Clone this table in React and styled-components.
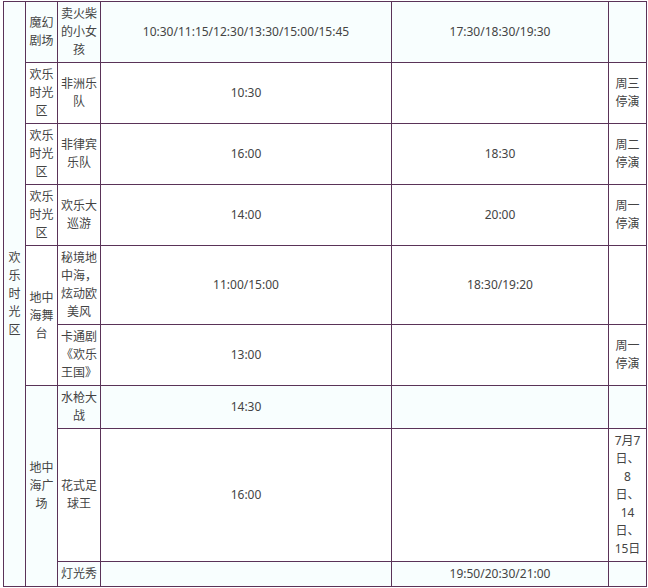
import React from "react";
import styled, { createGlobalStyle } from "styled-components";

const Global = createGlobalStyle`
  html, body { margin: 0; padding: 0; background: #ffffff; }
  body {
    font-family: "Noto Sans", "Noto Sans CJK SC", sans-serif;
    font-size: 12px;
    color: #444444;
  }
`;

const Page = styled.div`
  padding: 1px 0 0 3px;
`;

const Table = styled.table`
  border-collapse: collapse;
  table-layout: fixed;
  width: 644px;
  background: #ffffff;
`;

const Col = styled.col`
  width: ${(p) => p.$w}px;
`;

const Row = styled.tr`
  background: ${(p) => (p.$tint ? "#f8fefe" : "#ffffff")};
`;

const Cell = styled.td`
  border: 1px solid #5a3358;
  padding: 3px 2px;
  line-height: 18px;
  text-align: center;
  vertical-align: middle;
  word-break: normal;
  color: #444444;
`;

const cols = [22, 32, 43, 291, 217, 38];

const dates = ["7月7", "日、", "8", "日、", "14", "日、", "15日"];

export default function App() {
  return (
    <>
      <Global />
      <Page>
        <Table>
          <colgroup>
            {cols.map((w, i) => (
              <Col key={i} $w={w} />
            ))}
          </colgroup>
          <tbody>
            <Row $tint>
              <Cell rowSpan={9}>欢乐时光区</Cell>
              <Cell>魔幻剧场</Cell>
              <Cell>卖火柴的小女孩</Cell>
              <Cell>10:30/11:15/12:30/13:30/15:00/15:45</Cell>
              <Cell>17:30/18:30/19:30</Cell>
              <Cell></Cell>
            </Row>
            <Row>
              <Cell>欢乐时光区</Cell>
              <Cell>非洲乐队</Cell>
              <Cell>10:30</Cell>
              <Cell></Cell>
              <Cell>周三停演</Cell>
            </Row>
            <Row>
              <Cell>欢乐时光区</Cell>
              <Cell>非律宾乐队</Cell>
              <Cell>16:00</Cell>
              <Cell>18:30</Cell>
              <Cell>周二停演</Cell>
            </Row>
            <Row>
              <Cell>欢乐时光区</Cell>
              <Cell>欢乐大巡游</Cell>
              <Cell>14:00</Cell>
              <Cell>20:00</Cell>
              <Cell>周一停演</Cell>
            </Row>
            <Row>
              <Cell rowSpan={2}>地中海舞台</Cell>
              <Cell>秘境地中海，炫动欧美风</Cell>
              <Cell>11:00/15:00</Cell>
              <Cell>18:30/19:20</Cell>
              <Cell></Cell>
            </Row>
            <Row>
              <Cell>卡通剧《欢乐王国》</Cell>
              <Cell>13:00</Cell>
              <Cell></Cell>
              <Cell>周一停演</Cell>
            </Row>
            <Row $tint>
              <Cell rowSpan={3}>地中海广场</Cell>
              <Cell>水枪大战</Cell>
              <Cell>14:30</Cell>
              <Cell></Cell>
              <Cell></Cell>
            </Row>
            <Row>
              <Cell>花式足球王</Cell>
              <Cell>16:00</Cell>
              <Cell></Cell>
              <Cell>
                {dates.map((d, i) => (
                  <React.Fragment key={i}>
                    {d}
                    {i < dates.length - 1 && <br />}
                  </React.Fragment>
                ))}
              </Cell>
            </Row>
            <Row $tint>
              <Cell>灯光秀</Cell>
              <Cell></Cell>
              <Cell>19:50/20:30/21:00</Cell>
              <Cell></Cell>
            </Row>
          </tbody>
        </Table>
      </Page>
    </>
  );
}
